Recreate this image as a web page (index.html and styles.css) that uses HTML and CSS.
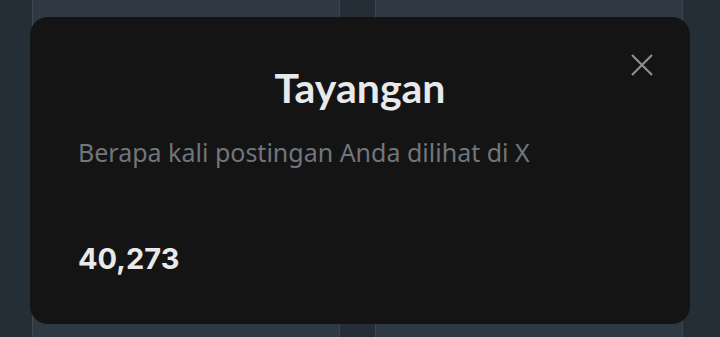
FILE: index.html
```html
<!DOCTYPE html>
<html lang="en">
<head>
  <meta charset="UTF-8">
  <meta name="viewport" content="width=device-width, initial-scale=1.0">
  <title>Tayangan</title>
  <link rel="stylesheet" href="styles.css">
</head>
<body>
  <div class="backdrop">
    <div class="panel"></div>
    <div class="panel"></div>
  </div>

  <div class="modal">
    <button class="close" aria-label="Tutup">
      <svg viewBox="0 0 24 24" width="30" height="30">
        <path d="M4 4 L20 20 M20 4 L4 20" stroke="#8e8f91" stroke-width="1.7" fill="none" />
      </svg>
    </button>
    <h2 class="modal-title">Tayangan</h2>
    <p class="modal-text">Berapa kali postingan Anda dilihat di X</p>
    <div class="modal-value">40,273</div>
  </div>
</body>
</html>
```

FILE: styles.css
```css
body {
  margin: 0;
  padding: 0;
  width: 720px;
  height: 337px;
  overflow: hidden;
  background-color: #252e37;
  font-family: "Noto Sans", Arial, sans-serif;
  position: relative;
}

.backdrop {
  display: flex;
  gap: 35px;
  padding-left: 32px;
  height: 337px;
}

.panel {
  width: 308px;
  height: 100%;
  background-color: #2f3944;
  border-left: 1px solid #3e4954;
  border-right: 1px solid #3a4450;
  box-sizing: border-box;
}

.modal {
  position: absolute;
  left: 30px;
  top: 17px;
  width: 660px;
  height: 307px;
  box-sizing: border-box;
  background-color: #141414;
  border-radius: 18px;
  padding: 0 48px;
}

.close {
  position: absolute;
  top: 33px;
  right: 33px;
  padding: 0;
  border: none;
  background: none;
  cursor: pointer;
}

.close svg {
  display: block;
}

.modal-title {
  margin: 47px 0 0;
  text-align: center;
  font-family: Lato, sans-serif;
  font-weight: bold;
  font-size: 41px;
  line-height: 48px;
  color: #e7e9ea;
}

.modal-text {
  margin: 24px 0 0;
  font-size: 25px;
  line-height: 32px;
  color: #71767b;
}

.modal-value {
  margin-top: 73px;
  font-family: Inter, Arial, sans-serif;
  font-weight: bold;
  font-size: 29px;
  line-height: 36px;
  color: #e7e9ea;
}
```
